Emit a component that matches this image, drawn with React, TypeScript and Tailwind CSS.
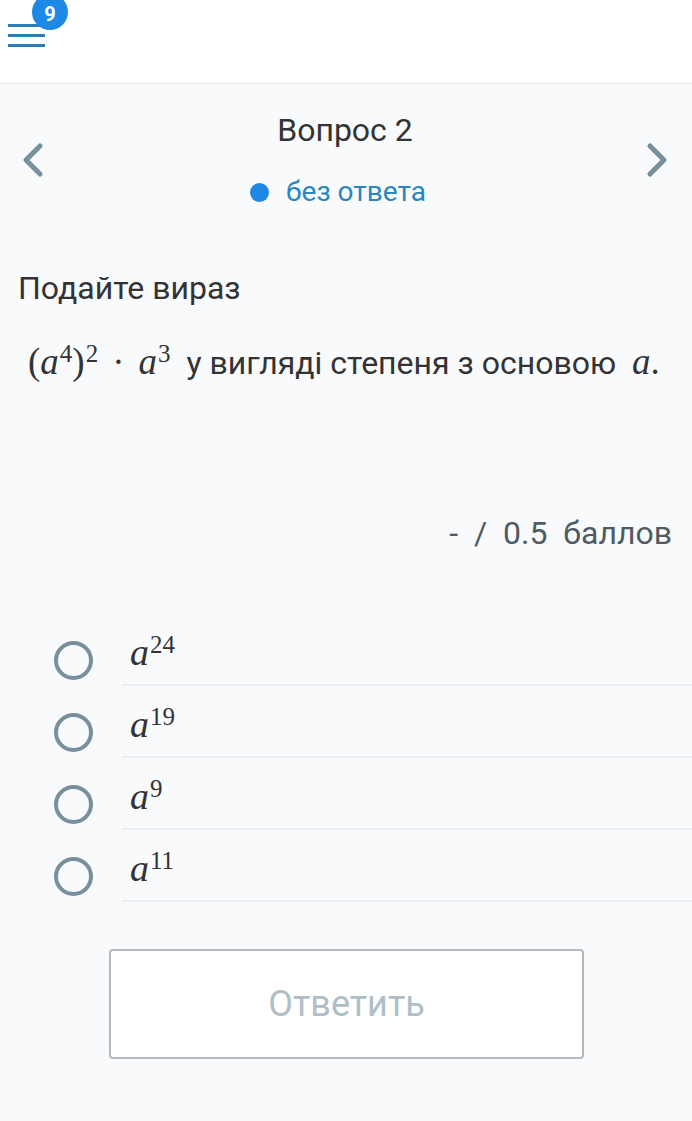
import React from "react";

const options = [
  { id: 1, exp: "24" },
  { id: 2, exp: "19" },
  { id: 3, exp: "9" },
  { id: 4, exp: "11" },
];

const math = { fontFamily: '"Liberation Serif", "DejaVu Serif", serif' };

const Chevron = ({ dir }: { dir: "left" | "right" }) => (
  <svg width="26" height="36" viewBox="0 0 26 36" fill="none">
    <path
      d={dir === "left" ? "M20 4 L6 18 L20 32" : "M6 4 L20 18 L6 32"}
      stroke="#78909c"
      strokeWidth="5"
      strokeLinecap="round"
      strokeLinejoin="round"
    />
  </svg>
);

export default function App() {
  return (
    <div
      className="w-[692px] min-h-[1121px] bg-[#f8fafc] text-[#333]"
      style={{ fontFamily: 'Roboto, "Noto Sans", sans-serif' }}
    >
      <header className="h-[84px] bg-white border-b border-[#e6eaed] relative">
        <div className="absolute left-[8px] top-[24px] flex flex-col gap-[7px]">
          <span className="block w-[37px] h-[3px] bg-[#2b7db5]" />
          <span className="block w-[37px] h-[3px] bg-[#2b7db5]" />
          <span className="block w-[37px] h-[3px] bg-[#2b7db5]" />
        </div>
        <div className="absolute left-[32px] top-[-6px] w-[36px] h-[36px] rounded-full bg-[#1e88e5] text-white text-[20px] font-bold flex items-center justify-center pt-[4px]">
          9
        </div>
      </header>

      <section className="flex items-center justify-between pl-[20px] pr-[22px] pt-[26px]">
        <Chevron dir="left" />
        <div className="flex flex-col items-center">
          <div className="text-[32px] leading-[40px] text-[#333]">Вопрос 2</div>
          <div className="flex items-center gap-[17px] mt-[25px] mr-[14px]">
            <span className="w-[19px] h-[19px] rounded-full bg-[#1e88e5]" />
            <span className="text-[28px] leading-[34px] text-[#2a86bd]">без ответа</span>
          </div>
        </div>
        <Chevron dir="right" />
      </section>

      <p className="px-[18px] mt-[59px] text-[32px] leading-[40px]">Подайте вираз</p>

      <p className="px-[28px] mt-[34px] text-[32px] leading-[40px] flex items-baseline whitespace-nowrap">
        <span style={math} className="text-[37px]">
          (<i>a</i>
          <sup className="text-[25px] ml-[1px]">4</sup>)<sup className="text-[25px] ml-[1px]">2</sup>
          <span className="mx-[14px]">·</span>
          <i>a</i>
          <sup className="text-[25px] ml-[1px]">3</sup>
        </span>
        <span className="ml-[16px]">у вигляді степеня з основою</span>
        <span style={math} className="text-[37px] ml-[16px]">
          <i>a</i>.
        </span>
      </p>

      <p className="px-[20px] mt-[130px] text-right text-[32px] leading-[40px] text-[#4f5b62] whitespace-pre">
        {"-  /  0.5  баллов"}
      </p>

      <ul className="mt-[61px]">
        {options.map((o) => (
          <li key={o.id} className="flex items-stretch h-[72px]">
            <div className="w-[122px] pl-[54px] pt-[27px]">
              <span className="block w-[39px] h-[39px] rounded-full border-[4px] border-[#78909c]" />
            </div>
            <div className="flex-1 border-b-2 border-[#eceff1] pl-[8px] pt-[18px]">
              <span style={math} className="text-[38px] leading-[40px] text-[#333]">
                <i>a</i>
                <sup className="text-[25px] ml-[1px]">{o.exp}</sup>
              </span>
            </div>
          </li>
        ))}
      </ul>

      <div className="flex justify-center mt-[47px] pl-[1px]">
        <button className="w-[475px] h-[110px] bg-white border-2 border-[#b3babe] rounded-[4px] text-[36px] text-[#b0bec5]">
          Ответить
        </button>
      </div>
    </div>
  );
}
